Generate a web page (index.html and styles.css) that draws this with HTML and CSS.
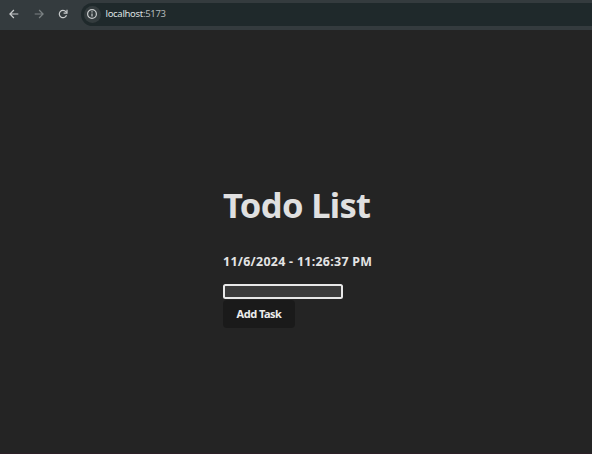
FILE: index.html
```html
<!DOCTYPE html>
<html lang="en">
<head>
<meta charset="utf-8">
<title>Todo List</title>
<link rel="stylesheet" href="styles.css">
</head>
<body>
<header class="toolbar">
  <svg class="icon" viewBox="0 0 12 12"><path d="M10.3 6H2M5.9 2L1.9 6l4 4"/></svg>
  <svg class="icon dim" viewBox="0 0 12 12"><path d="M1.7 6H10M6.1 2l4 4-4 4"/></svg>
  <svg class="icon" viewBox="0 0 12 12"><path d="M9.5 7.2A3.7 3.7 0 1 1 8.9 3.7L9.7 4.7"/><path d="M10 1.7v3.4H6.6"/></svg>
  <div class="address">
    <span class="info"><svg class="icon" viewBox="0 0 12 12"><circle cx="6" cy="6" r="4.4"/><path d="M6 5.5v3M6 3.3v1.1"/></svg></span>
    <span class="url">localhost<span class="port">:5173</span></span>
  </div>
</header>
<main class="page">
  <h1 class="title">Todo List</h1>
  <h2 class="date">11/6/2024 - 11:26:37 PM</h2>
  <input class="task" type="text" aria-label="Task">
  <button class="add">Add Task</button>
</main>
</body>
</html>
```
FILE: styles.css
```css
* { box-sizing: border-box; }
body {
  margin: 0;
  height: 454px;
  overflow: hidden;
  background: #242424;
  border-bottom: 1px solid #2b2027;
  font-family: "Noto Sans", "Open Sans", sans-serif;
}
.toolbar {
  display: flex;
  align-items: center;
  height: 30px;
  padding: 0 0 3px 8px;
  background: #343b3e;
}
.icon {
  width: 12px;
  height: 12px;
  margin-right: 12.5px;
  flex: none;
  fill: none;
  stroke: #c9cccd;
  stroke-width: 1.2;
}
.dim { stroke: #7c8284; }
.address {
  display: flex;
  align-items: center;
  flex: 1;
  height: 23px;
  margin: 1px 0 0 -1px;
  padding-left: 3px;
  background: #1f292b;
  border-radius: 12px 0 0 12px;
}
.info {
  display: grid;
  place-items: center;
  width: 17px;
  height: 17px;
  border-radius: 50%;
  background: #343c3e;
}
.info .icon { margin: 0; }
.url {
  margin-left: 5px;
  font-size: 9.5px;
  line-height: 12px;
  letter-spacing: -0.3px;
  color: #dfe2e2;
}
.port { color: #b4b9ba; }
.page {
  display: flex;
  flex-direction: column;
  align-items: flex-start;
  padding: 155px 0 0 223px;
}
.title {
  margin: 0;
  font-size: 34.5px;
  line-height: 40px;
  letter-spacing: -0.65px;
  font-weight: 700;
  color: #e0e0e0;
  white-space: nowrap;
}
.date {
  margin: 28px 0 0;
  font-size: 12.4px;
  line-height: 18px;
  letter-spacing: 0.3px;
  font-weight: 700;
  color: #e4e4e4;
  white-space: nowrap;
}
.task {
  width: 120px;
  height: 15px;
  margin: 13px 0 0;
  padding: 0;
  border: 2px solid #e8e8e8;
  border-radius: 2.5px;
  outline: none;
  background: #3b3b3b;
}
.add {
  width: 72px;
  height: 28px;
  margin-top: 1px;
  padding: 0;
  border: 0;
  border-radius: 4px;
  background: #1a1a1a;
  color: #ececec;
  font: 700 11px/28px "Noto Sans", sans-serif;
  letter-spacing: -0.5px;
}
```
